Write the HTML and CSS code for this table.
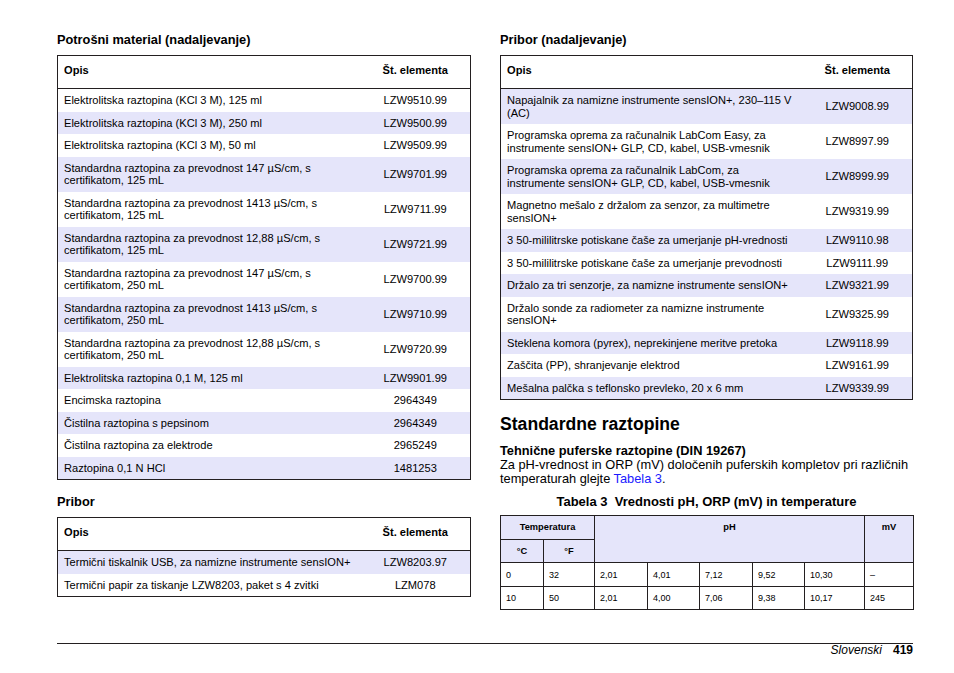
FILE: index.html
```html
<!DOCTYPE html>
<html lang="sl">
<head>
<meta charset="utf-8">
<title>Slovenski 419</title>
<link rel="stylesheet" href="styles.css">
</head>
<body>
<div class="page">
  <div class="columns">
    <div class="col col-left">
      <h3 class="sec-title">Potrošni material (nadaljevanje)</h3>
      <table class="parts">
        <thead>
          <tr><th class="c1">Opis</th><th class="c2">Št. elementa</th></tr>
        </thead>
        <tbody>
          <tr><td class="c1">Elektrolitska raztopina (KCl 3 M), 125 ml</td><td class="c2">LZW9510.99</td></tr>
          <tr class="alt"><td class="c1">Elektrolitska raztopina (KCl 3 M), 250 ml</td><td class="c2">LZW9500.99</td></tr>
          <tr><td class="c1">Elektrolitska raztopina (KCl 3 M), 50 ml</td><td class="c2">LZW9509.99</td></tr>
          <tr class="alt"><td class="c1">Standardna raztopina za prevodnost 147 µS/cm, s<br>certifikatom, 125 mL</td><td class="c2">LZW9701.99</td></tr>
          <tr><td class="c1">Standardna raztopina za prevodnost 1413 µS/cm, s<br>certifikatom, 125 mL</td><td class="c2">LZW9711.99</td></tr>
          <tr class="alt"><td class="c1">Standardna raztopina za prevodnost 12,88 µS/cm, s<br>certifikatom, 125 mL</td><td class="c2">LZW9721.99</td></tr>
          <tr><td class="c1">Standardna raztopina za prevodnost 147 µS/cm, s<br>certifikatom, 250 mL</td><td class="c2">LZW9700.99</td></tr>
          <tr class="alt"><td class="c1">Standardna raztopina za prevodnost 1413 µS/cm, s<br>certifikatom, 250 mL</td><td class="c2">LZW9710.99</td></tr>
          <tr><td class="c1">Standardna raztopina za prevodnost 12,88 µS/cm, s<br>certifikatom, 250 mL</td><td class="c2">LZW9720.99</td></tr>
          <tr class="alt"><td class="c1">Elektrolitska raztopina 0,1 M, 125 ml</td><td class="c2">LZW9901.99</td></tr>
          <tr><td class="c1">Encimska raztopina</td><td class="c2">2964349</td></tr>
          <tr class="alt"><td class="c1">Čistilna raztopina s pepsinom</td><td class="c2">2964349</td></tr>
          <tr><td class="c1">Čistilna raztopina za elektrode</td><td class="c2">2965249</td></tr>
          <tr class="alt"><td class="c1">Raztopina 0,1 N HCl</td><td class="c2">1481253</td></tr>
        </tbody>
      </table>

      <h3 class="sec-title sec-gap">Pribor</h3>
      <table class="parts">
        <thead>
          <tr><th class="c1">Opis</th><th class="c2">Št. elementa</th></tr>
        </thead>
        <tbody>
          <tr class="alt"><td class="c1">Termični tiskalnik USB, za namizne instrumente sensION+</td><td class="c2">LZW8203.97</td></tr>
          <tr><td class="c1">Termični papir za tiskanje LZW8203, paket s 4 zvitki</td><td class="c2">LZM078</td></tr>
        </tbody>
      </table>
    </div>

    <div class="col col-right">
      <h3 class="sec-title">Pribor (nadaljevanje)</h3>
      <table class="parts">
        <thead>
          <tr><th class="c1">Opis</th><th class="c2">Št. elementa</th></tr>
        </thead>
        <tbody>
          <tr class="alt"><td class="c1">Napajalnik za namizne instrumente sensION+, 230–115 V<br>(AC)</td><td class="c2">LZW9008.99</td></tr>
          <tr><td class="c1">Programska oprema za računalnik LabCom Easy, za<br>instrumente sensION+ GLP, CD, kabel, USB-vmesnik</td><td class="c2">LZW8997.99</td></tr>
          <tr class="alt"><td class="c1">Programska oprema za računalnik LabCom, za<br>instrumente sensION+ GLP, CD, kabel, USB-vmesnik</td><td class="c2">LZW8999.99</td></tr>
          <tr><td class="c1">Magnetno mešalo z držalom za senzor, za multimetre<br>sensION+</td><td class="c2">LZW9319.99</td></tr>
          <tr class="alt"><td class="c1">3 50-mililitrske potiskane čaše za umerjanje pH-vrednosti</td><td class="c2">LZW9110.98</td></tr>
          <tr><td class="c1">3 50-mililitrske potiskane čaše za umerjanje prevodnosti</td><td class="c2">LZW9111.99</td></tr>
          <tr class="alt"><td class="c1">Držalo za tri senzorje, za namizne instrumente sensION+</td><td class="c2">LZW9321.99</td></tr>
          <tr><td class="c1">Držalo sonde za radiometer za namizne instrumente<br>sensION+</td><td class="c2">LZW9325.99</td></tr>
          <tr class="alt"><td class="c1">Steklena komora (pyrex), neprekinjene meritve pretoka</td><td class="c2">LZW9118.99</td></tr>
          <tr><td class="c1">Zaščita (PP), shranjevanje elektrod</td><td class="c2">LZW9161.99</td></tr>
          <tr class="alt"><td class="c1">Mešalna palčka s teflonsko prevleko, 20 x 6 mm</td><td class="c2">LZW9339.99</td></tr>
        </tbody>
      </table>

      <h2 class="big-title">Standardne raztopine</h2>
      <h4 class="sub-title">Tehnične puferske raztopine (DIN 19267)</h4>
      <p class="body-text"><span class="line">Za pH-vrednost in ORP (mV) določenih puferskih kompletov pri različnih</span><span class="line">temperaturah glejte <a class="xref" href="#t3">Tabela 3</a>.</span></p>

      <p class="caption" id="t3">Tabela 3&nbsp; Vrednosti pH, ORP (mV) in temperature</p>
      <table class="temps">
        <colgroup>
          <col class="w43"><col class="w51"><col class="w53"><col class="w52"><col class="w53"><col class="w52"><col class="w60"><col class="w49">
        </colgroup>
        <thead>
          <tr class="h1"><th colspan="2">Temperatura</th><th colspan="5" rowspan="2">pH</th><th rowspan="2">mV</th></tr>
          <tr class="h2"><th>°C</th><th>°F</th></tr>
        </thead>
        <tbody>
          <tr class="r1"><td>0</td><td>32</td><td>2,01</td><td>4,01</td><td>7,12</td><td>9,52</td><td>10,30</td><td>–</td></tr>
          <tr class="r2"><td>10</td><td>50</td><td>2,01</td><td>4,00</td><td>7,06</td><td>9,38</td><td>10,17</td><td>245</td></tr>
        </tbody>
      </table>
    </div>
  </div>

  <div class="footer">
    <span class="lang">Slovenski</span>
    <span class="pageno">419</span>
  </div>
</div>
</body>
</html>
```

FILE: styles.css
```css
* { box-sizing: border-box; }

html, body {
  margin: 0;
  padding: 0;
  background: #ffffff;
}

body {
  font-family: "Liberation Sans", Arial, sans-serif;
  color: #000;
}

.page {
  width: 954px;
  height: 673px;
  padding: 32px 41px 16px 57px;
  display: flex;
  flex-direction: column;
}

.columns {
  display: flex;
  gap: 29px;
}

.col-left { width: 414px; }
.col-right { width: 413px; }

.sec-title {
  font-size: 12.8px;
  line-height: 16px;
  font-weight: bold;
  margin: 0 0 7px 0;
}

.sec-gap { margin-top: 14px; }

.parts {
  width: 100%;
  border-collapse: collapse;
  border: 1px solid #231f20;
  font-size: 11.1px;
  line-height: 12.5px;
}

.parts th {
  font-weight: bold;
  text-align: left;
  padding: 8px 6px 11px 6px;
  line-height: 13px;
  border-bottom: 1px solid #231f20;
}

.parts td {
  padding: 5px 6px;
  vertical-align: middle;
}

.parts .c2 {
  width: 110px;
  text-align: center;
}

.parts tr.alt td {
  background: #e5e5fa;
}

.big-title {
  font-size: 17.6px;
  line-height: 22px;
  font-weight: bold;
  margin: 13px 0 0 0;
}

.sub-title {
  font-size: 12.8px;
  line-height: 14px;
  font-weight: bold;
  margin: 9px 0 0 0;
}

.body-text {
  font-size: 12.8px;
  line-height: 14px;
  margin: 0;
}

.line { display: block; }

.xref {
  color: #1a1aff;
  text-decoration: none;
}

.caption {
  font-size: 13px;
  line-height: 14px;
  font-weight: bold;
  text-align: center;
  margin: 9px 0 6px 0;
}

.temps {
  width: 100%;
  border-collapse: collapse;
  table-layout: fixed;
  font-size: 9px;
  line-height: 10px;
}

.temps .w43 { width: 43px; }
.temps .w51 { width: 51px; }
.temps .w53 { width: 53px; }
.temps .w52 { width: 52px; }
.temps .w60 { width: 60px; }
.temps .w49 { width: 49px; }

.temps th,
.temps td {
  border: 1px solid #231f20;
}

.temps th {
  background: #e5e5fa;
  font-weight: bold;
  font-size: 9.3px;
  text-align: center;
  vertical-align: top;
  padding: 6px 2px 0 2px;
}

.temps tr.h1 th { height: 24px; }
.temps tr.h2 th { height: 23px; }

.temps td {
  text-align: left;
  padding: 0 5px;
  vertical-align: middle;
}

.temps tr.r1 td { height: 24px; }
.temps tr.r2 td { height: 23px; }

.footer {
  margin-top: auto;
  border-top: 1px solid #231f20;
  display: flex;
  justify-content: flex-end;
  align-items: baseline;
  gap: 11px;
  font-size: 12px;
  line-height: 13px;
}

.lang { font-style: italic; }
.pageno { font-weight: bold; }
```
